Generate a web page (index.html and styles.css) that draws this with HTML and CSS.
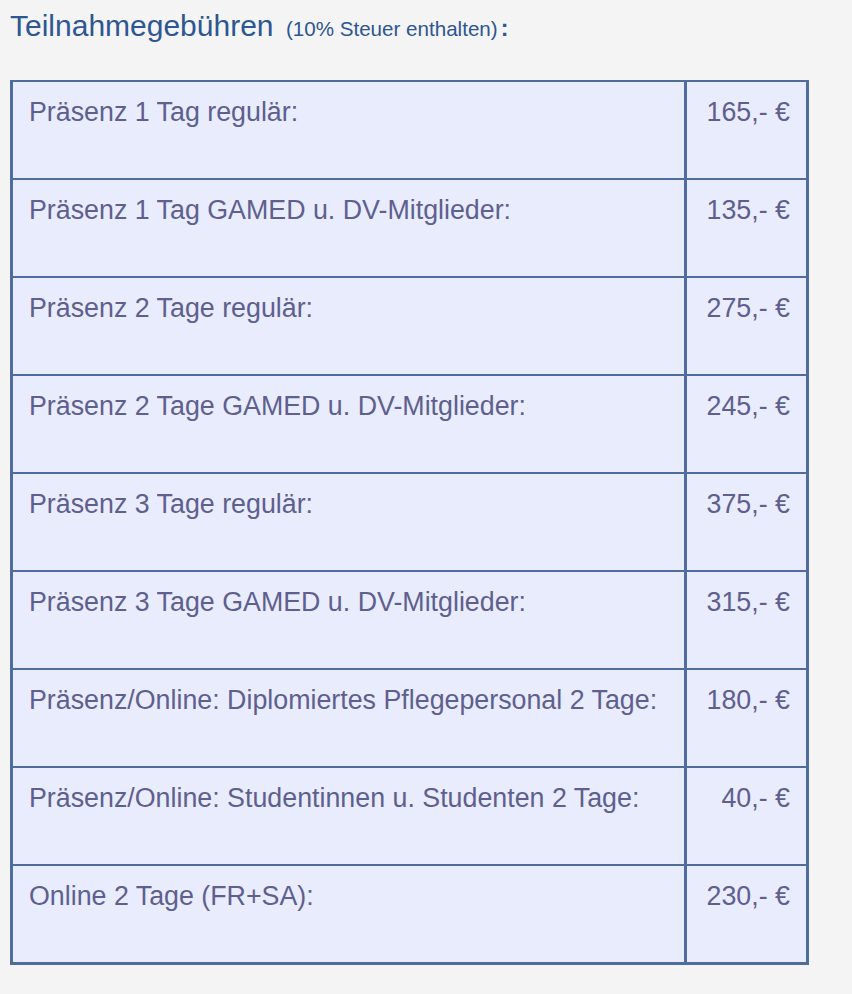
FILE: index.html
```html
<!DOCTYPE html>
<html lang="de">
<head>
<meta charset="utf-8">
<title>Teilnahmegebühren</title>
<link rel="stylesheet" href="styles.css">
</head>
<body>
<div class="page">
  <h2 class="title">Teilnahmegebühren <span class="note">(10% Steuer enthalten)</span><b class="colon">:</b></h2>
  <table class="fees">
    <tbody>
      <tr><td class="label">Präsenz 1 Tag regulär:</td><td class="price">165,- €</td></tr>
      <tr><td class="label">Präsenz 1 Tag GAMED u. DV-Mitglieder:</td><td class="price">135,- €</td></tr>
      <tr><td class="label">Präsenz 2 Tage regulär:</td><td class="price">275,- €</td></tr>
      <tr><td class="label">Präsenz 2 Tage GAMED u. DV-Mitglieder:</td><td class="price">245,- €</td></tr>
      <tr><td class="label">Präsenz 3 Tage regulär:</td><td class="price">375,- €</td></tr>
      <tr><td class="label">Präsenz 3 Tage GAMED u. DV-Mitglieder:</td><td class="price">315,- €</td></tr>
      <tr><td class="label">Präsenz/Online: Diplomiertes Pflegepersonal 2 Tage:</td><td class="price">180,- €</td></tr>
      <tr><td class="label">Präsenz/Online: Studentinnen u. Studenten 2 Tage:</td><td class="price">40,- €</td></tr>
      <tr><td class="label">Online 2 Tage (FR+SA):</td><td class="price">230,- €</td></tr>
    </tbody>
  </table>
</div>
</body>
</html>
```

FILE: styles.css
```css
html, body {
  margin: 0;
  padding: 0;
  background: #f4f4f4;
}

body {
  font-family: "Liberation Sans", Arial, Helvetica, sans-serif;
}

.page {
  padding: 9px 0 0 10px;
}

.title {
  margin: 0 0 38px 0;
  height: 33px;
  font-size: 30px;
  line-height: 33px;
  font-weight: normal;
  color: #2e5693;
}

.note {
  font-size: 20.6px;
  margin-left: 4px;
}

.colon {
  font-size: 23px;
  font-weight: bold;
  margin-left: 3px;
}

.fees {
  border-collapse: separate;
  border-spacing: 0;
  width: 799px;
  background: #e8ecfc;
  border-style: solid;
  border-color: #4f6c9e;
  border-width: 2px 3px 3px 3px;
}

.fees td {
  height: 30px;
  padding: 15px 16px 51px 16px;
  vertical-align: top;
  font-size: 26.8px;
  line-height: 30px;
  color: #5e5f8e;
}

.fees tr + tr td {
  border-top: 2px solid #4f6c9e;
}

.fees td.label {
  width: 639px;
  border-right: 3px solid #4f6c9e;
}

.fees td.price {
  text-align: right;
  white-space: nowrap;
}
```
